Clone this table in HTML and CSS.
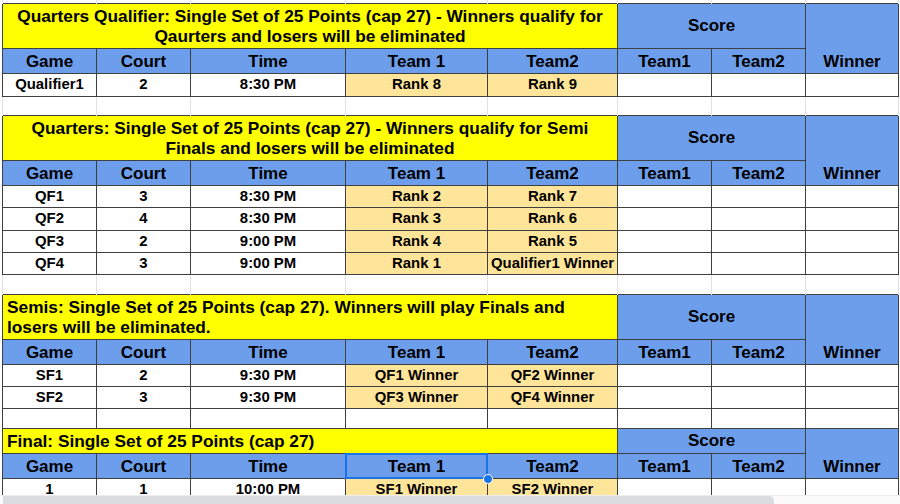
FILE: index.html
```html
<!DOCTYPE html>
<html lang="en">
<head>
<meta charset="utf-8">
<title>Playoffs</title>
<link rel="stylesheet" href="styles.css">
</head>
<body>
<table class="sheet">
  <colgroup>
    <col class="c-game"><col class="c-court"><col class="c-time"><col class="c-t1"><col class="c-t2"><col class="c-s1"><col class="c-s2"><col class="c-win">
  </colgroup>
  <tbody>
    <tr class="h-strip"><td class="g"></td><td class="g"></td><td class="g"></td><td class="g"></td><td class="g"></td><td class="g"></td><td class="g"></td><td class="g"></td></tr>

    <tr class="h-45">
      <td colspan="5" class="title center">Quarters Qualifier: Single Set of 25 Points (cap 27) - Winners qualify for<br>Qaurters and losers will be eliminated</td>
      <td colspan="2" class="blue score">Score</td>
      <td rowspan="2" class="blue winner">Winner</td>
    </tr>
    <tr class="h-25">
      <td class="blue hd">Game</td><td class="blue hd">Court</td><td class="blue hd">Time</td><td class="blue hd">Team 1</td><td class="blue hd">Team2</td><td class="blue hd">Team1</td><td class="blue hd">Team2</td>
    </tr>
    <tr class="h-23">
      <td>Qualifier1</td><td>2</td><td>8:30 PM</td><td class="org">Rank 8</td><td class="org">Rank 9</td><td></td><td></td><td></td>
    </tr>
    <tr class="h-19"><td class="g"></td><td class="g"></td><td class="g"></td><td class="g"></td><td class="g"></td><td class="g"></td><td class="g"></td><td class="g"></td></tr>

    <tr class="h-45">
      <td colspan="5" class="title center">Quarters: Single Set of 25 Points (cap 27) - Winners qualify for Semi<br>Finals and losers will be eliminated</td>
      <td colspan="2" class="blue score">Score</td>
      <td rowspan="2" class="blue winner">Winner</td>
    </tr>
    <tr class="h-25">
      <td class="blue hd">Game</td><td class="blue hd">Court</td><td class="blue hd">Time</td><td class="blue hd">Team 1</td><td class="blue hd">Team2</td><td class="blue hd">Team1</td><td class="blue hd">Team2</td>
    </tr>
    <tr class="h-22">
      <td>QF1</td><td>3</td><td>8:30 PM</td><td class="org">Rank 2</td><td class="org">Rank 7</td><td></td><td></td><td></td>
    </tr>
    <tr class="h-23">
      <td>QF2</td><td>4</td><td>8:30 PM</td><td class="org">Rank 3</td><td class="org">Rank 6</td><td></td><td></td><td></td>
    </tr>
    <tr class="h-22">
      <td>QF3</td><td>2</td><td>9:00 PM</td><td class="org">Rank 4</td><td class="org">Rank 5</td><td></td><td></td><td></td>
    </tr>
    <tr class="h-22">
      <td>QF4</td><td>3</td><td>9:00 PM</td><td class="org">Rank 1</td><td class="org">Qualifier1 Winner</td><td></td><td></td><td></td>
    </tr>
    <tr class="h-20"><td class="g"></td><td class="g"></td><td class="g"></td><td class="g"></td><td class="g"></td><td class="g"></td><td class="g"></td><td class="g"></td></tr>

    <tr class="h-45">
      <td colspan="5" class="title left">Semis: Single Set of 25 Points (cap 27). Winners will play Finals and<br>losers will be eliminated.</td>
      <td colspan="2" class="blue score">Score</td>
      <td rowspan="2" class="blue winner">Winner</td>
    </tr>
    <tr class="h-25">
      <td class="blue hd">Game</td><td class="blue hd">Court</td><td class="blue hd">Time</td><td class="blue hd">Team 1</td><td class="blue hd">Team2</td><td class="blue hd">Team1</td><td class="blue hd">Team2</td>
    </tr>
    <tr class="h-22">
      <td>SF1</td><td>2</td><td>9:30 PM</td><td class="org">QF1 Winner</td><td class="org">QF2 Winner</td><td></td><td></td><td></td>
    </tr>
    <tr class="h-22">
      <td>SF2</td><td>3</td><td>9:30 PM</td><td class="org">QF3 Winner</td><td class="org">QF4 Winner</td><td></td><td></td><td></td>
    </tr>
    <tr class="h-20">
      <td></td><td></td><td></td><td></td><td></td><td></td><td></td><td></td>
    </tr>

    <tr class="h-25">
      <td colspan="5" class="title left">Final: Single Set of 25 Points (cap 27)</td>
      <td colspan="2" class="blue score">Score</td>
      <td rowspan="2" class="blue winner">Winner</td>
    </tr>
    <tr class="h-25">
      <td class="blue hd">Game</td><td class="blue hd">Court</td><td class="blue hd">Time</td><td class="blue hd sel">Team 1</td><td class="blue hd">Team2</td><td class="blue hd">Team1</td><td class="blue hd">Team2</td>
    </tr>
    <tr class="h-22">
      <td>1</td><td>1</td><td>10:00 PM</td><td class="org">SF1 Winner</td><td class="org">SF2 Winner</td><td></td><td></td><td></td>
    </tr>
  </tbody>
</table>

<div class="hscroll"><div class="hscroll-thumb"></div></div>
</body>
</html>
```

FILE: styles.css
```css
html, body {
  margin: 0;
  padding: 0;
  background: #ffffff;
  overflow: hidden;
  width: 900px;
  height: 504px;
}

.sheet {
  border-collapse: collapse;
  table-layout: fixed;
  width: 897px;
  margin-left: 2px;
  font-family: "Liberation Sans", Arial, sans-serif;
  color: #000;
}

.c-game { width: 94px; }
.c-court { width: 94px; }
.c-time { width: 155px; }
.c-t1 { width: 142px; }
.c-t2 { width: 130px; }
.c-s1 { width: 94px; }
.c-s2 { width: 94px; }
.c-win { width: 93px; }

.sheet td {
  border: 1px solid #3f3f3f;
  padding: 0 3px;
  font-size: 14.9px;
  font-weight: 700;
  line-height: 17px;
  text-align: center;
  vertical-align: middle;
  white-space: nowrap;
  overflow: hidden;
  background: #ffffff;
}

.sheet td.g {
  border-top: none;
  border-bottom: none;
  border-left: 1px solid #e1e1e1;
  border-right: 1px solid #e1e1e1;
}

.h-strip { height: 3px; }
.h-45 { height: 45px; }
.h-25 { height: 25px; }
.h-23 { height: 23px; }
.h-22 { height: 22px; }
.h-20 { height: 20px; }
.h-19 { height: 19px; }

.sheet td.title {
  background: #ffff00;
  font-size: 17.3px;
  line-height: 20px;
  vertical-align: middle;
  padding-top: 1px;
}
.sheet td.title.center { text-align: center; }
.sheet td.title.left { text-align: left; padding-left: 4px; }

.sheet td.blue { background: #6d9eeb; }

.sheet td.score {
  font-size: 17px;
  line-height: 20px;
  vertical-align: middle;
  padding-top: 1px;
}

.sheet td.hd,
.sheet td.winner {
  font-size: 17px;
  line-height: 20px;
  vertical-align: bottom;
  padding-bottom: 1px;
}

.sheet td.org { background: #ffe599; }

.sheet td.sel { position: relative; overflow: visible; }
.sheet td.sel::after {
  content: "";
  position: absolute;
  left: -1px;
  top: -1px;
  right: -1px;
  bottom: -1px;
  border: 2px solid #1a73e8;
  pointer-events: none;
}
.sheet td.sel::before {
  content: "";
  position: absolute;
  right: -6px;
  bottom: -6px;
  width: 8px;
  height: 8px;
  border-radius: 50%;
  background: #1a73e8;
  border: 1px solid #ffffff;
  z-index: 2;
}

.hscroll {
  position: fixed;
  left: 0;
  right: 0;
  top: 495px;
  height: 9px;
  background: #fbfbfb;
  border-top: 1px solid #ececec;
}
.hscroll-thumb {
  margin-left: 3px;
  width: 771px;
  height: 9px;
  background: #dadce0;
  border-radius: 0 5px 0 0;
}
```
